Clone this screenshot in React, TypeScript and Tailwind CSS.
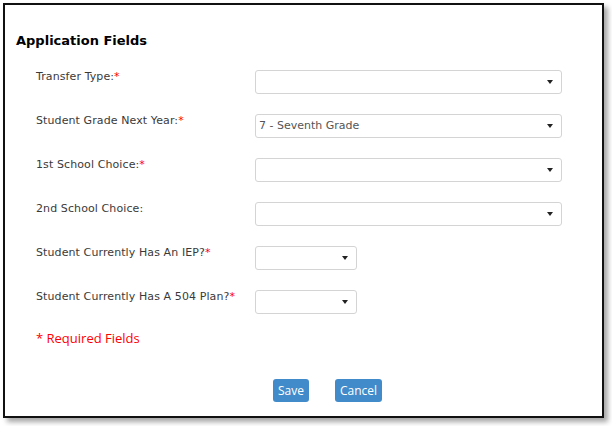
import { type ReactNode } from "react";

type Field = {
  label: string;
  required?: boolean;
  value?: string;
  small?: boolean;
};

const fields: Field[] = [
  { label: "Transfer Type:", required: true },
  { label: "Student Grade Next Year:", required: true, value: "7 - Seventh Grade" },
  { label: "1st School Choice:", required: true },
  { label: "2nd School Choice:" },
  { label: "Student Currently Has An IEP?", required: true, small: true },
  { label: "Student Currently Has A 504 Plan?", required: true, small: true },
];

function SelectBox({ value, small }: { value?: string; small?: boolean }) {
  return (
    <div
      className={
        (small ? "w-[102px] " : "w-[307px] ") +
        "flex h-[24px] items-center justify-between rounded-[3px] border border-[#d4d4d4] bg-white pl-[3px] pr-[8px] text-[11px] text-[#555]"
      }
    >
      <span>{value}</span>
      <svg width="6" height="4" viewBox="0 0 6 4" className="shrink-0">
        <path d="M0 0h6L3 4z" fill="#222" />
      </svg>
    </div>
  );
}

function Row({ field }: { field: Field }): ReactNode {
  return (
    <div className="flex h-[44px] items-start">
      <div className="w-[250px] shrink-0 pl-[31px] pt-[2px] text-[11px] leading-[14px] tracking-[0.1px] text-[#3a3a3a]">
        {field.label}
        {field.required ? <span className="text-[#ff0000]">*</span> : null}
      </div>
      <div className="shrink-0 pt-[2px]">
        <SelectBox value={field.value} small={field.small} />
      </div>
    </div>
  );
}

export default function App() {
  return (
    <div
      className="h-[426px] w-[612px] bg-white pl-[3px] pt-[3px]"
      style={{ fontFamily: '"DejaVu Sans", Verdana, sans-serif' }}
    >
      <div className="h-[415px] w-[601px] border-2 border-[#111] bg-white shadow-[4px_4px_5px_rgba(0,0,0,0.35)]">
        <h2 className="pl-[11px] pt-[27px] text-[13px] font-bold leading-[18px] text-black">
          Application Fields
        </h2>
        <div className="mt-[18px]">
          {fields.map((f) => (
            <Row key={f.label} field={f} />
          ))}
        </div>
        <p
          className="mt-[-3px] pl-[31px] text-[13px] leading-[18px] text-[#ff0000]"
          style={{ fontFamily: '"Open Sans", "Liberation Sans", sans-serif' }}
        >
          * Required Fields
        </p>
        <div
          className="mt-[32px] flex gap-[26px] pl-[268px]"
          style={{ fontFamily: '"Open Sans", "Liberation Sans", sans-serif' }}
        >
          <button className="h-[23px] rounded-[3px] bg-[#428bca] px-[5px] text-[12px] text-white">
            Save
          </button>
          <button className="h-[23px] rounded-[3px] bg-[#428bca] px-[5px] text-[12px] text-white">
            Cancel
          </button>
        </div>
      </div>
    </div>
  );
}
